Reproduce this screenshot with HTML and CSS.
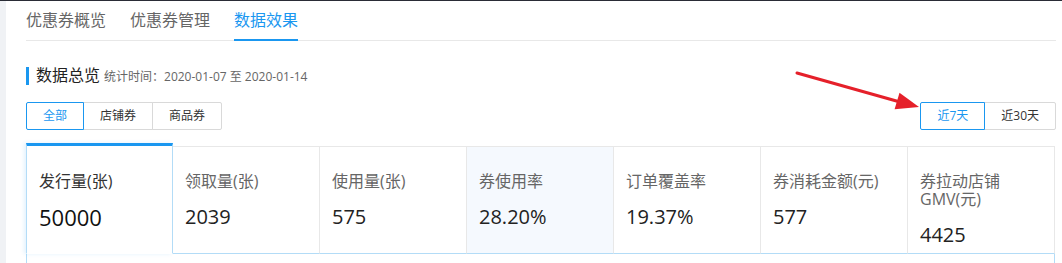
FILE: index.html
```html
<!DOCTYPE html>
<html lang="zh-CN">
<head>
<meta charset="utf-8">
<title>数据效果</title>
<link rel="stylesheet" href="styles.css">
</head>
<body>
<div class="page">
  <div class="side"></div>
  <div class="main">
    <nav class="tabs">
      <a class="tab">优惠券概览</a>
      <a class="tab">优惠券管理</a>
      <a class="tab active">数据效果</a>
    </nav>

    <div class="title">
      <span class="title-text">数据总览</span>
      <span class="title-sub">统计时间：2020-01-07 至 2020-01-14</span>
    </div>

    <div class="toolbar">
      <div class="btn-group">
        <button class="btn active">全部</button>
        <button class="btn">店铺券</button>
        <button class="btn">商品券</button>
      </div>
      <div class="btn-group">
        <button class="btn active">近7天</button>
        <button class="btn">近30天</button>
      </div>
    </div>

    <div class="cards">
      <div class="card active">
        <div class="card-label">发行量(张)</div>
        <div class="card-value">50000</div>
      </div>
      <div class="card">
        <div class="card-label">领取量(张)</div>
        <div class="card-value">2039</div>
      </div>
      <div class="card">
        <div class="card-label">使用量(张)</div>
        <div class="card-value">575</div>
      </div>
      <div class="card hover">
        <div class="card-label">券使用率</div>
        <div class="card-value">28.20%</div>
      </div>
      <div class="card">
        <div class="card-label">订单覆盖率</div>
        <div class="card-value">19.37%</div>
      </div>
      <div class="card">
        <div class="card-label">券消耗金额(元)</div>
        <div class="card-value">577</div>
      </div>
      <div class="card">
        <div class="card-label">券拉动店铺GMV(元)</div>
        <div class="card-value">4425</div>
      </div>
    </div>
    <div class="panel"></div>
  </div>

  <svg class="arrow" width="1062" height="263" viewBox="0 0 1062 263" aria-hidden="true">
    <line x1="797" y1="73" x2="900" y2="102" stroke="#e5202a" stroke-width="3" stroke-linecap="round"/>
    <polygon points="919,107 899.5,92.8 894.6,109.2" fill="#e5202a"/>
  </svg>
</div>
</body>
</html>
```

FILE: styles.css
```css
* { box-sizing: border-box; }

html, body {
  margin: 0;
  padding: 0;
  background: #fff;
}

body {
  font-family: "Open Sans", "Noto Sans CJK SC", sans-serif;
  color: #333;
}

.page {
  position: relative;
  display: flex;
  width: 1062px;
  height: 263px;
  overflow: hidden;
  border-top: 1px solid #2a2c36;
}

.side {
  width: 6px;
  flex: none;
  background: #f0f2f5;
}

.main {
  flex: 1;
  padding: 0 6px 0 20px;
}

/* Tabs */
.tabs {
  display: flex;
  gap: 24px;
  border-bottom: 1px solid #e8e8e8;
}

.tab {
  font-size: 16px;
  line-height: 38px;
  color: #666;
  border-bottom: 2px solid transparent;
  margin-bottom: -1px;
  cursor: pointer;
}

.tab.active {
  color: #1a97f0;
  border-bottom-color: #1a97f0;
}

/* Title */
.title {
  display: flex;
  align-items: baseline;
  margin-top: 26px;
  border-left: 3px solid #1a97f0;
  padding-left: 7px;
  line-height: 16px;
}

.title-text {
  font-size: 16px;
  color: #222;
}

.title-sub {
  font-size: 12px;
  color: #666;
  margin-left: 4px;
}

/* Toolbar */
.toolbar {
  display: flex;
  justify-content: space-between;
  margin-top: 17px;
}

.btn-group {
  display: flex;
}

.btn {
  font-family: inherit;
  font-size: 12px;
  line-height: 26px;
  height: 28px;
  padding: 0 16px;
  border: 1px solid #d9d9d9;
  background: #fff;
  color: #333;
  margin: 0 0 0 -1px;
  cursor: pointer;
}

.btn:first-child {
  margin-left: 0;
  border-radius: 2px 0 0 2px;
}

.btn:last-child {
  border-radius: 0 2px 2px 0;
}

.btn.active {
  position: relative;
  z-index: 1;
  border-color: #1a97f0;
  color: #1a97f0;
}

/* Cards */
.cards {
  display: grid;
  grid-template-columns: repeat(7, 147px);
  margin-top: 13px;
}

.card {
  margin-top: 3px;
  padding: 25px 12px 3px 12px;
  border-top: 1px solid #e8e8e8;
  border-right: 1px solid #e8e8e8;
  border-bottom: 1px solid #b3dcf7;
  background: #fff;
}

.card.hover {
  background: #f5f9fe;
}

.card.active {
  margin-top: 0;
  padding-top: 26px;
  padding-left: 12px;
  border-top: 3px solid #1a97f0;
  border-left: 1px solid #b3dcf7;
  border-right: 1px solid #b3dcf7;
  border-bottom: 1px solid #fff;
  box-shadow: -2px 0 4px rgba(26, 151, 240, 0.12);
}

.card-label {
  font-size: 16px;
  line-height: 18px;
  color: #666;
}

.card.active .card-label {
  color: #333;
}

.card-value {
  margin-top: 12px;
  font-size: 20px;
  line-height: 30px;
  color: #222;
}

.card.active .card-value {
  font-size: 22px;
  color: #111;
}

.panel {
  width: 1029px;
  height: 20px;
  border-left: 1px solid #b3dcf7;
  border-right: 1px solid #b3dcf7;
}

/* Annotation arrow */
.arrow {
  position: absolute;
  left: 0;
  top: -1px;
  pointer-events: none;
}
```
